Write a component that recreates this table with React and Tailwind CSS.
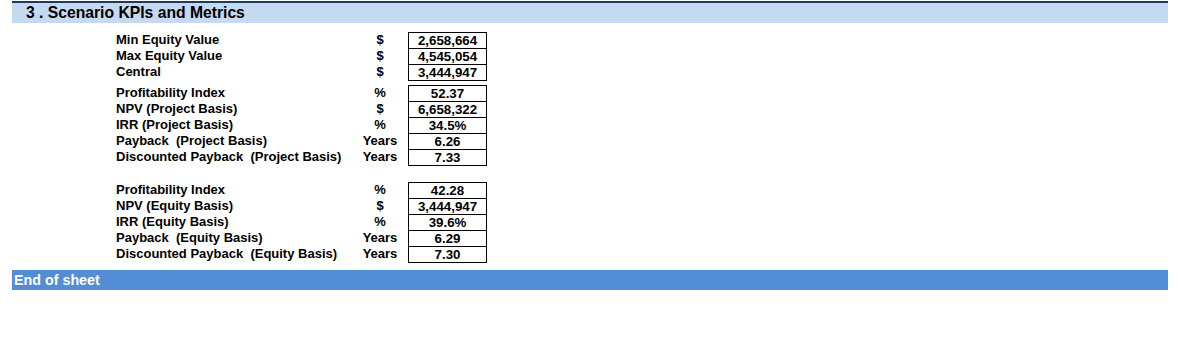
import React from 'react';

const groups = [
  {
    mt: 'mt-[9px]',
    rows: [
      ['Min Equity Value', '$', '2,658,664'],
      ['Max Equity Value', '$', '4,545,054'],
      ['Central', '$', '3,444,947'],
    ],
  },
  {
    mt: 'mt-[5px]',
    rows: [
      ['Profitability Index', '%', '52.37'],
      ['NPV (Project Basis)', '$', '6,658,322'],
      ['IRR (Project Basis)', '%', '34.5%'],
      ['Payback  (Project Basis)', 'Years', '6.26'],
      ['Discounted Payback  (Project Basis)', 'Years', '7.33'],
    ],
  },
  {
    mt: 'mt-[17px]',
    rows: [
      ['Profitability Index', '%', '42.28'],
      ['NPV (Equity Basis)', '$', '3,444,947'],
      ['IRR (Equity Basis)', '%', '39.6%'],
      ['Payback  (Equity Basis)', 'Years', '6.29'],
      ['Discounted Payback  (Equity Basis)', 'Years', '7.30'],
    ],
  },
];

export default function App() {
  return (
    <div
      className="w-[1178px] h-[340px] bg-white pt-px pl-[12px] pr-[10px] text-black"
      style={{ fontFamily: '"Liberation Sans", Arial, sans-serif' }}
    >
      {/* Section header */}
      <div className="h-[22px] border-t-2 border-[#1f3a60] bg-[#c5d9f1] pl-[14px] text-[15.7px] font-bold leading-[20px]">
        3 . Scenario KPIs and Metrics
      </div>

      {/* KPI groups */}
      {groups.map((g, gi) => (
        <div key={gi} className={`${g.mt} flex flex-col pl-[104px]`}>
          {g.rows.map(([label, unit, value], i) => (
            <div key={i} className="flex h-[16px] text-[13px] font-bold leading-[15px]">
              <div className="w-[236px] whitespace-pre">{label}</div>
              <div className="w-[56px] text-center">{unit}</div>
              <div
                className={`w-[79px] border-x border-t border-black text-center text-[13.3px] ${
                  i === g.rows.length - 1 ? 'h-[17px] border-b' : ''
                }`}
              >
                {value}
              </div>
            </div>
          ))}
        </div>
      ))}

      {/* Footer */}
      <div className="mt-[8px] h-[20px] bg-[#538dd5] pl-[2px] text-[14.3px] font-bold leading-[20px] text-white">
        End of sheet
      </div>
    </div>
  );
}
